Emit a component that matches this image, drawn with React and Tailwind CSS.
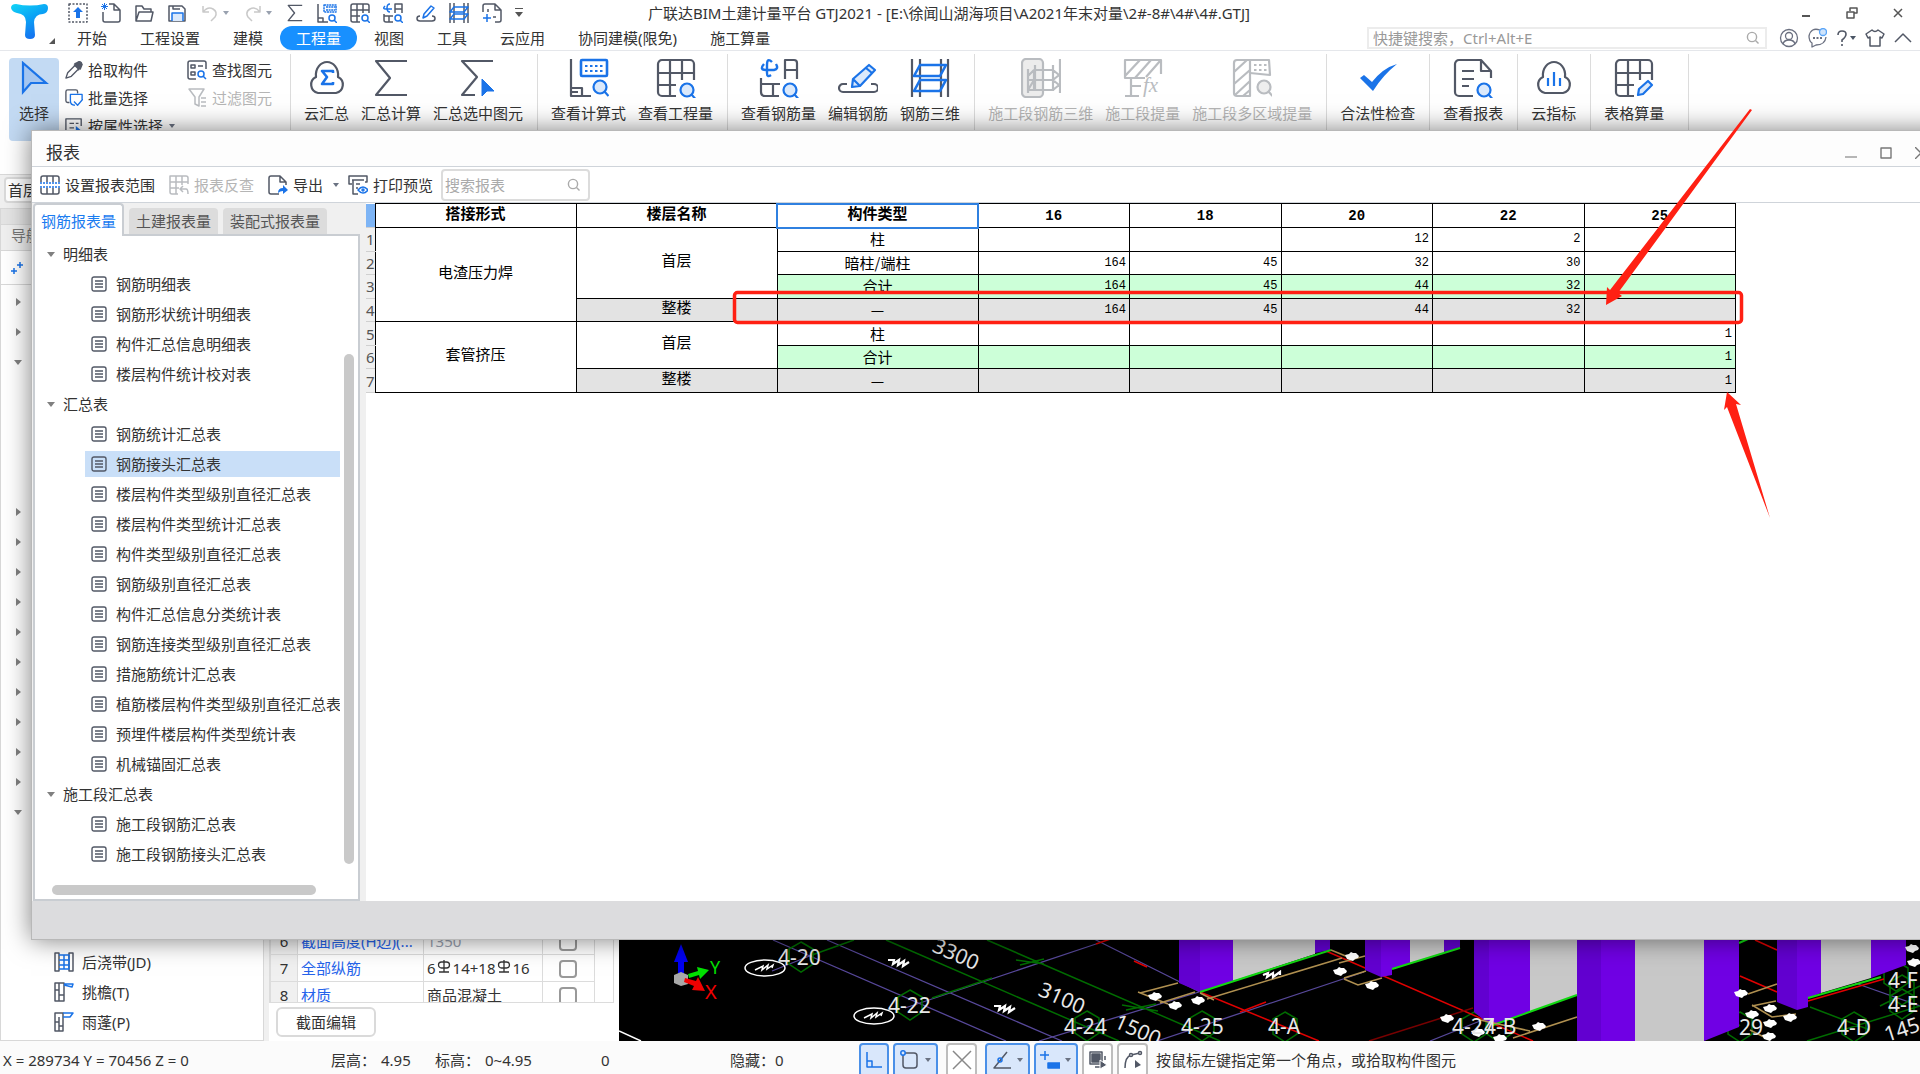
const GRAY = "#525866";
const BLUE = "#1a73e8";
const MUTED = "#b9bcc0";

function Icon({ box = 20, className = "w-5 h-5", color = GRAY, width = 1.5, children }) {
  return (
    <svg
      viewBox={`0 0 ${box} ${box}`}
      className={`shrink-0 ${className}`}
      fill="none"
      stroke={color}
      strokeWidth={width}
      strokeLinejoin="round"
      aria-hidden="true"
    >
      {children}
    </svg>
  );
}

function Big({ color = GRAY, children }) {
  return (
    <Icon box={40} className="w-10 h-10" color={color} width={2.2}>
      {children}
    </Icon>
  );
}

function Caret({ className = "text-gray-500" }) {
  return (
    <svg viewBox="0 0 8 8" className={`w-2 h-2 shrink-0 ${className}`} fill="currentColor" aria-hidden="true">
      <path d="M1 2h6L4 6z" />
    </svg>
  );
}

function Search({ className = "w-4 h-4" }) {
  return (
    <Icon box={16} className={className} color="#aaa" width={1.4}>
      <circle cx="7" cy="7" r="4.6" />
      <path d="M10.5 10.5l3 3" />
    </Icon>
  );
}

function Lens({ x = 31, y = 32, color = BLUE, fill = "#dbe9fb" }) {
  return (
    <g stroke={color}>
      <circle cx={x} cy={y} r="6.5" fill={fill} />
      <path d={`M${x + 4.5} ${y + 4.5}l4 4.5`} />
    </g>
  );
}

const sigma = "M36 3H5l14 17L5 37h31";
const cloud = "M11 35a8.5 8.5 0 0 1-2-16c-1-9 5-15 11-15s12 6 11 15a8.5 8.5 0 0 1-2 16z";
const gridPath = "M20 38H6a4 4 0 0 1-4-4V6a4 4 0 0 1 4-4h28a4 4 0 0 1 4 4v16M2 15h36M2 27h18M14 2v36M26 2v20";

function CloudSum() {
  return (
    <Big>
      <path d={cloud} />
      <path d="M26 15v-2H15l5 6-5 7h11v-2" stroke={BLUE} strokeWidth="2.6" />
    </Big>
  );
}

function Sigma() {
  return (
    <Big>
      <path d={sigma} />
    </Big>
  );
}

function SigmaPick() {
  return (
    <Big>
      <path d="M35 3H4l15 16L4 37h13" />
      <path d="M24 21v17l5-5h7z" fill={BLUE} stroke={BLUE} strokeWidth="1" />
    </Big>
  );
}

function Formula() {
  return (
    <Big>
      <path d="M2 1v37h20M2 30h11v8M2 34h7" />
      <rect x="12" y="2" width="26" height="16" rx="1" stroke={BLUE} strokeWidth="2.6" />
      <path d="M16 8h19M16 13h19" stroke={BLUE} strokeDasharray="2.5 2.5" />
      <Lens y={29} />
    </Big>
  );
}

function GridFind() {
  return (
    <Big>
      <path d={gridPath} />
      <Lens />
    </Big>
  );
}

function RebarFind() {
  return (
    <Big>
      <path d="M26 21V2h9q3 0 3 3v16M26 12h12M2 20v14q0 4 4 4h14M2 26h19M14 26v12" />
      <path d="M13 4q-5-5-5 3v8q0 5 4 2M5 6q-5 6 2 6h8q5-1 2-6" stroke={BLUE} strokeWidth="2.4" />
      <Lens />
    </Big>
  );
}

function RebarEdit() {
  return (
    <Big>
      <path d="M9 26H5a4 4 0 1 0 0 8h31a4 4 0 1 0 0-8h-3" />
      <path d="M14 29l1-8L31 7l6 5-15 16zM28 10l6 5M15 21l7 7" stroke={BLUE} fill="#dbe9fb" />
    </Big>
  );
}

function Rebar3d() {
  return (
    <Big>
      <path d="M2 1v38M10 1v38M31 1v38M38 1v38" />
      <path d="M4 18L10 7h26l-6 11zM4 33l6-11h26l-6 11z" stroke={BLUE} strokeWidth="2.6" />
    </Big>
  );
}

function Stage3d() {
  return (
    <Big color={MUTED}>
      <rect x="1" y="1" width="21" height="38" rx="4" fill="#ececec" />
      <path d="M7 11v24M14 7v26M32 7v26M39 1v34M7 18l6-6h19l6 5-6 5H7M7 32l6-10M13 12v20h19l6-5-6-5M7 32h6" />
    </Big>
  );
}

function StageFx() {
  return (
    <Big color={MUTED}>
      <path d="M38 16V2H2v18h20M8 20v18M2 38h14M8 28h10M2 18L17 2M12 20L28 2M23 19L37 3" />
      <text x="20" y="34" fontSize="21" fontStyle="italic" fontFamily="Liberation Serif" fill={MUTED} stroke="none">
        fx
      </text>
    </Big>
  );
}

function StageArea() {
  return (
    <Big color={MUTED}>
      <path d="M18 2H5a3 3 0 0 0-3 3v30a3 3 0 0 0 3 3h13zM2 14L15 2M2 26L18 12M3 37L18 23M11 38l7-6" />
      <path d="M18 2h19l1 15-20-2" />
      <path d="M22 7h13M22 12h13" strokeDasharray="2.5 2.5" />
      <Lens x={32} y={29} color={MUTED} fill="#eee" />
    </Big>
  );
}

function Check() {
  return (
    <Big>
      <path d="M2 20l4-3 8 7Q25 10 39 6 25 17 15 33z" fill={BLUE} stroke="none" />
    </Big>
  );
}

function ReportFind() {
  return (
    <Big>
      <path d="M20 38H6a4 4 0 0 1-4-4V6a4 4 0 0 1 4-4h22l10 11v7M28 3v10h10" />
      <path d="M9 13h12M9 21h12M9 28h7" />
      <Lens />
    </Big>
  );
}

function CloudChart() {
  return (
    <Big>
      <path d={cloud} />
      <path d="M14 28v-8M20 28V14M26 28v-8" stroke={BLUE} />
    </Big>
  );
}

function GridEdit() {
  return (
    <Big>
      <path d={gridPath} />
      <path d="M24 37l1-6 9-8 4 4-9 9z" stroke={BLUE} fill="#dbe9fb" />
    </Big>
  );
}

const ribbonGroups = [
  [
    ["云汇总", CloudSum],
    ["汇总计算", Sigma],
    ["汇总选中图元", SigmaPick],
  ],
  [
    ["查看计算式", Formula],
    ["查看工程量", GridFind],
  ],
  [
    ["查看钢筋量", RebarFind],
    ["编辑钢筋", RebarEdit],
    ["钢筋三维", Rebar3d],
  ],
  [
    ["施工段钢筋三维", Stage3d, true],
    ["施工段提量", StageFx, true],
    ["施工段多区域提量", StageArea, true],
  ],
  [["合法性检查", Check]],
  [["查看报表", ReportFind]],
  [["云指标", CloudChart]],
  [["表格算量", GridEdit]],
];

const menus = ["开始", "工程设置", "建模", "工程量", "视图", "工具", "云应用", "协同建模(限免)", "施工算量"];

function QuickAccess() {
  return (
    <div className="flex w-[586px] shrink-0 items-center gap-[13px] pl-1.5">
      <button aria-label="上传">
        <Icon>
          <rect x="1" y="1" width="18" height="18" strokeDasharray="2 1.5" />
          <path d="M10 4l5 5h-3v6H8V9H5z" fill={BLUE} stroke="none" />
        </Icon>
      </button>
      <button aria-label="新建">
        <Icon>
          <path d="M8 1h5l6 6v10q0 2-2 2H4q-2 0-2-2V9M13 1v6h6" />
          <path d="M1 1l5 5M6 1L1 6M3.500 0v7M0 3.500h7" stroke={BLUE} strokeWidth="1" />
        </Icon>
      </button>
      <button aria-label="打开">
        <Icon>
          <path d="M2 18V3h6l2 3h7v3M2 18L5 9h14l-2 9z" />
        </Icon>
      </button>
      <button aria-label="保存">
        <Icon>
          <path d="M2 3h13l3 3v12H2zM6 3v3h7" />
          <path d="M5 18v-8h11v8" stroke={BLUE} fill="#dbe9fb" />
        </Icon>
      </button>
      <button aria-label="撤销" className="flex items-center gap-0.5">
        <Icon color="#c9c9c9">
          <path d="M3 3v6h6M3 9q5-6 10-3t2 8l-4 4" />
        </Icon>
        <Caret className="text-gray-400" />
      </button>
      <button aria-label="重做" className="flex items-center gap-0.5">
        <Icon color="#c9c9c9">
          <path d="M17 3v6h-6M17 9Q12 3 7 6t-2 8l4 4" />
        </Icon>
        <Caret className="text-gray-400" />
      </button>
      <button aria-label="汇总">
        <Icon box={40} className="w-[18px] h-5" width={3}>
          <path d={sigma} />
        </Icon>
      </button>
      <button aria-label="计算式">
        <Icon>
          <path d="M1 1v18h10M1 15h5v4" />
          <path d="M7 2h12v7H7zM9 4h9M9 7h9" stroke={BLUE} strokeDasharray="2 .6" />
          <circle cx="15" cy="15" r="3" stroke={BLUE} />
          <path d="M17 17l3 3" stroke={BLUE} />
        </Icon>
      </button>
      <button aria-label="工程量">
        <Icon>
          <path d="M10 19H3q-2 0-2-2V3q0-2 2-2h14q2 0 2 2v7M1 7h18M1 13h9M7 1v18M13 1v9" />
          <circle cx="15" cy="15" r="3" stroke={BLUE} />
          <path d="M17 17l3 3" stroke={BLUE} />
        </Icon>
      </button>
      <button aria-label="钢筋量">
        <Icon>
          <path d="M12 10V1h7v9M12 6h7M1 11v6q0 2 2 2h7M1 13h9M6 13v6" />
          <path d="M7 1Q4 1 4 5t3 4M2 3Q-1 6 3 6h6M15 12a3 3 0 1 0 0 6 3 3 0 1 0 0-6M17 17l3 3" stroke={BLUE} />
        </Icon>
      </button>
      <button aria-label="编辑钢筋">
        <Icon>
          <path d="M4 13q-3 0-3 2.500T4 18h12q3 0 3-2.500T16 13" />
          <path d="M7 15l1-4 7-8 3 2-7 8z" stroke={BLUE} />
        </Icon>
      </button>
      <button aria-label="三维">
        <Icon>
          <path d="M1 0v20M5 0v20M15 0v20M19 0v20" />
          <path d="M1 9l4-5h14l-4 5zM1 16l4-5h14l-4 5z" stroke={BLUE} />
        </Icon>
      </button>
      <button aria-label="导出图元">
        <Icon>
          <path d="M1 9V3q0-2 2-2h10l6 6v10q0 2-2 2h-4M13 1v6h6M6 6v3M14 14h-3" />
          <path d="M5 11v8M1 15h8" stroke={BLUE} />
        </Icon>
      </button>
      <button aria-label="更多">
        <svg viewBox="0 0 8 10" className="w-2 h-2.5" fill="#555" aria-hidden="true">
          <path d="M0 0h8v1H0zM0 4h8L4 9z" />
        </svg>
      </button>
    </div>
  );
}

function Header() {
  return (
    <header className="flex border-b border-gray-200 bg-white">
      <div className="flex w-[62px] shrink-0 items-end pl-[11px] pb-1.5">
        <svg viewBox="0 0 38 38" className="mb-1 w-[38px] h-[38px]" aria-hidden="true">
          <defs>
            <linearGradient id="logo" x1="0" y1="0" x2="0.5" y2="1">
              <stop offset="0" stopColor="#12d5f6" />
              <stop offset="0.5" stopColor="#0aa4f5" />
              <stop offset="1" stopColor="#1673f0" />
            </linearGradient>
          </defs>
          <path
            d="M5 2Q19 5 33 2q4 0 4 4 0 5-5 6-8 0-9 8l1 13q0 4-5 4t-5-4l1-13q0-8-9-9-5-1-6-5 0-4 5-4z"
            fill="url(#logo)"
          />
        </svg>
        <svg viewBox="0 0 6 6" className="w-1.5 h-1.5 shrink-0" aria-hidden="true">
          <path d="M6 0v6H0z" fill="#555" />
        </svg>
      </div>
      <div className="min-w-0 flex-1">
        <div className="flex h-[26px] items-center">
          <QuickAccess />
          <h1 className="whitespace-nowrap">
            广联达BIM土建计量平台 GTJ2021 - [E:\徐闻山湖海项目\A2021年末对量\2#-8#\4#\4#.GTJ]
          </h1>
          <div className="ml-auto flex items-center gap-[34px] pr-4">
            <button aria-label="最小化">
              <Icon box={12} className="w-3 h-3" color="#555" width={2}>
                <path d="M2 9h8" />
              </Icon>
            </button>
            <button aria-label="还原">
              <Icon box={12} className="w-3 h-3" color="#555">
                <path d="M4 4V1h7v5H8M1 5h7v6H1z" />
              </Icon>
            </button>
            <button aria-label="关闭">
              <Icon box={12} className="w-3 h-3" color="#555">
                <path d="M2 2l8 8M10 2l-8 8" />
              </Icon>
            </button>
          </div>
        </div>
        <div className="flex h-6 items-center">
          <nav className="-ml-px flex gap-px whitespace-nowrap">
            {menus.map((m) => (
              <button
                key={m}
                className={`h-6 px-4 ${m === "工程量" ? "rounded-full bg-[#1890ff] text-white" : ""}`}
              >
                {m}
              </button>
            ))}
          </nav>
          <label className="ml-auto flex h-[22px] w-[400px] items-center border-2 border-[#ececec] px-1">
            <input
              className="min-w-0 flex-1 outline-none placeholder:text-[#999]"
              placeholder="快捷键搜索，Ctrl+Alt+E"
              aria-label="快捷键搜索"
            />
            <Search />
          </label>
          <div className="ml-3 flex items-center gap-2 pr-[7px]">
            <button aria-label="用户">
              <Icon color="#6b7080" width={1.3}>
                <circle cx="10" cy="10" r="8.500" />
                <circle cx="10" cy="8" r="3.5" />
                <path d="M4 16q1-4 6-4t6 4" />
              </Icon>
            </button>
            <button aria-label="消息">
              <Icon color="#6b7080" width={1.3}>
                <path d="M13 2Q4-1 2 8q0 5 3 7v4l4-2q9 0 10-8" />
                <path d="M6 10h9" strokeDasharray="2 1.500" strokeWidth="2" />
                <circle cx="16" cy="4" r="3.5" stroke="#5aa5f8" fill="#cfe4fc" />
              </Icon>
            </button>
            <button aria-label="帮助" className="flex w-[22px] items-center">
              <Icon box={14} className="w-3.5 h-5" color="#525866" width={1.600}>
                <path d="M3 4q0-4 4-4t4 3-4 6v2M7 13v2" />
              </Icon>
              <Caret className="text-gray-600" />
            </button>
            <button aria-label="皮肤">
              <Icon>
                <path d="M7 2q3 3 6 0l6 4-2 4-2-1v9H5V9l-2 1-2-4z" />
              </Icon>
            </button>
            <button aria-label="收起">
              <Icon>
                <path d="M2 14l8-8 8 8" />
              </Icon>
            </button>
          </div>
        </div>
      </div>
    </header>
  );
}

function Ribbon() {
  return (
    <div className="flex h-[123px] shrink-0 whitespace-nowrap bg-white pl-[9px]">
      <button className="mt-[7px] flex h-[83px] w-[50px] flex-col items-center rounded bg-[#c3daf3] pt-[3px]">
        <Icon box={34} className="w-[34px] h-[34px]" color={BLUE} width={2.2}>
          <path d="M6 2v29l8-9h15z" fill="#a5c6f0" strokeLinejoin="miter" />
        </Icon>
        <span className="mt-2">选择</span>
      </button>
      <div className="ml-1.5 flex w-[122px] flex-col gap-2 pt-[9px]">
        <button className="flex items-center gap-[5px]">
          <Icon className="w-[18px] h-5">
            <path d="M1 19l2-6 8-8 4 4-8 8zM10 4l6 6M12 5q2-5 5-4t0 6l-2 2z" />
            <path d="M11 3l6 6 2-5-3-3z" fill={GRAY} />
          </Icon>
          拾取构件
        </button>
        <button className="flex items-center gap-[5px]">
          <Icon className="w-[18px] h-5">
            <path d="M5 15H3q-2 0-2-2V3q0-2 2-2h9q2 0 2 2v2" />
            <path d="M11 18q-5 0-5-5V6h13v7M10 14l4 4 6-7" stroke={BLUE} />
          </Icon>
          批量选择
        </button>
        <button className="flex items-center gap-[5px]">
          <Icon className="w-[18px] h-5">
            <path d="M10 18H1V2h17v8M5 7h5M5 12h5M12 7h3" />
            <path d="M12 10v8l6-3z" fill={BLUE} stroke="none" />
          </Icon>
          按属性选择
          <Caret />
        </button>
      </div>
      <div className="flex w-[103px] flex-col gap-2 pt-[9px]">
        <button className="flex items-center gap-[5px]">
          <Icon>
            <path d="M9 19H3q-2 0-2-2V3q0-2 2-2h14q2 0 2 2v6M4 5h4v3H4zM4 12h4v3H4zM11 6h5" />
            <circle cx="14" cy="14" r="3" stroke={BLUE} />
            <path d="M16 16l3 3" stroke={BLUE} />
          </Icon>
          查找图元
        </button>
        <button className="flex items-center gap-[5px] text-[#b5b5b5]">
          <Icon color={MUTED}>
            <path d="M2 1h15l-5 8v9l-4-2V9zM14 10h5M14 14h5M14 18h5" />
          </Icon>
          过滤图元
        </button>
      </div>
      {ribbonGroups.map((group, i) => (
        <div
          key={i}
          className={`mt-[3px] flex gap-3 border-l border-[#dcdcdc] pr-3.5 pl-[13px] ${
            i === ribbonGroups.length - 1 ? "mr-auto border-r pr-6" : ""
          }`}
        >
          {group.map(([label, Pic, off]) => (
            <button
              key={label}
              className={`flex h-[69px] flex-col items-center justify-between pt-1 ${off ? "text-[#b5b5b5]" : ""}`}
            >
              <Pic />
              <span>{label}</span>
            </button>
          ))}
        </div>
      ))}
    </div>
  );
}

const navRows = [
  "closed", "closed", "open", "", "", "", "", "closed", "closed", "closed",
  "closed", "closed", "closed", "closed", "closed", "closed", "closed", "open",
];

function NavPanel() {
  return (
    <aside className="flex w-[264px] shrink-0 flex-col border border-[#d8d8d8] bg-white">
      <div className="h-[15px] bg-[#e4e4e4]" />
      <div className="h-[27px] border-y border-[#d8d8d8] bg-[#efefef] pl-2.5 text-[#777]">导航栏</div>
      <div className="flex h-[34px] shrink-0 items-center border-b border-[#d8d8d8] pl-2.5">
        <Icon box={12} className="w-3 h-3" color={BLUE}>
          <path d="M3 6v6M0 9h6M9 0v6M6 3h6" />
        </Icon>
      </div>
      <div className="pt-0.5">
        {navRows.map((state, i) => (
          <div key={i} className="flex h-[30px] items-center pl-3">
            {state && (
              <svg viewBox="0 0 10 10" className="w-2.5 h-2.5" fill="#808080" aria-hidden="true">
                <path d={state === "open" ? "M1 3h8L5 8z" : "M3 1v8l5-4z"} />
              </svg>
            )}
          </div>
        ))}
      </div>
      <div className="mt-auto pb-[3px]">
        <div className="flex h-[30px] items-center gap-2 pl-[53px]">
          <Icon>
            <path d="M1 1h4v18H1zM15 1h4v18h-4z" />
            <path d="M5 3h10v14H5M10 3v14M5 8h10M5 13h10" stroke={BLUE} />
          </Icon>
          后浇带(JD)
        </div>
        <div className="flex h-[30px] items-center gap-2 pl-[53px]">
          <Icon>
            <path d="M1 1h9v18H1zM5 1v18M1 8h4M5 13h5" />
            <path d="M10 2h9l-1 3-8-2" stroke={BLUE} />
          </Icon>
          挑檐(T)
        </div>
        <div className="flex h-[30px] items-center gap-2 pl-[53px]">
          <Icon>
            <path d="M1 1h8v18H1zM5 5v14M1 10h4M5 14h4" />
            <path d="M9 1h10l-3 4H9" stroke={BLUE} />
          </Icon>
          雨蓬(P)
        </div>
      </div>
    </aside>
  );
}

const props = [
  [6, "截面高度(H边)(...", "1350"],
  [7, "全部纵筋", ""],
  [8, "材质", "商品混凝土"],
];

function Rebar() {
  return (
    <svg viewBox="0 0 17 15" className="inline-block w-[17px] h-[15px] align-baseline" fill="none" stroke="#333" strokeWidth="1.3" aria-hidden="true">
      <path d="M8 1v12M3 13h10" />
      <rect x="2.500" y="3" width="11" height="6" rx="3" />
    </svg>
  );
}

function PropertyPanel() {
  return (
    <section className="ml-[5px] flex w-[345px] shrink-0 flex-col justify-end bg-white">
      <div className="h-[76px] overflow-hidden border-x border-b border-[#dcdcdc]">
        <table className="w-[324px] table-fixed border-collapse">
          <colgroup>
            <col className="w-[27px]" />
            <col className="w-[126px]" />
            <col className="w-[119px]" />
            <col className="w-[52px]" />
          </colgroup>
          <tbody>
            {props.map(([n, name, value]) => (
              <tr key={n} className="h-[27px] whitespace-nowrap">
                <td className="border border-[#dcdcdc] bg-[#f0f0f0] text-center">{n}</td>
                <td className="border border-[#dcdcdc] pl-[3px] text-[#2563eb]">{name}</td>
                <td className={`border border-[#dcdcdc] pl-[3px] ${n === 6 ? "text-gray-400" : ""}`}>
                  {n === 7 ? (
                    <span>
                      6<Rebar />14+18<Rebar />16
                    </span>
                  ) : (
                    value
                  )}
                </td>
                <td className="border border-[#dcdcdc] pr-0.5 text-center">
                  <input
                    type="checkbox"
                    aria-label={name}
                    className="h-[18px] w-[18px] appearance-none rounded-sm border-2 border-[#999] align-middle"
                  />
                </td>
              </tr>
            ))}
          </tbody>
        </table>
      </div>
      <button className="mt-1 mb-1 ml-[7px] h-[30px] w-[100px] rounded-md border-2 border-[#dadada]">截面编辑</button>
    </section>
  );
}

const purpleCols = [
  ["M1179 930V983l21 9V930z", "M1200 930V992l33-11V930z"],
  ["M1315 930V953l15-3V930z", ""],
  ["M1365 930V970l16 7V930z", "M1381 930V977l11-2v-6l18-6V930z"],
  ["M1444 930V952l16-4V930z", ""],
  ["M1474 930V1012l15 12V930z", "M1489 930V1024l4 1 37-13V930z"],
  ["M1577 930V1041h24V930z", "M1601 930V1041h34V930z"],
  ["", "M1704 930V1041l35-14V930z"],
  ["M1777 930V1002l20 8V930z", "M1797 930V1010l11-3v-9l13-5V930z"],
  ["", "M1871 930V978l35-13V930z"],
];

const hexagons = [
  [801, 957], [910, 1005], [1087, 1026], [1202, 1026], [1285, 1027], [1474, 1027],
  [1499, 1027], [1740, 1027], [1854, 1027], [1896, 976], [1902, 990], [1902, 1004],
];

const blobs = [
  [1155, 996], [1175, 1005], [1198, 1000], [1352, 956], [1340, 971], [1372, 985], [1447, 1018], [1478, 1032],
  [1539, 1026], [1500, 1038], [1741, 993], [1770, 1008], [1790, 1017], [1752, 1014], [1770, 1023], [1769, 1036],
  [1912, 948], [1914, 962],
];

const marks = [
  [778, 965, "4-20"], [888, 1013, "4-22"], [1064, 1034, "4-24"], [1181, 1034, "4-25"],
  [1268, 1034, "4-A"], [1452, 1034, "4-27"], [1484, 1034, "4-B"], [1739, 1035, "29"],
  [1837, 1035, "4-D"], [1888, 1012, "4-E"], [1888, 988, "4-F"],
];

function ModelView() {
  return (
    <div className="flex min-w-0 flex-1 items-end bg-black">
      <svg
        viewBox="619 930 1301 111"
        preserveAspectRatio="xMinYMax slice"
        className="h-[111px] w-full"
        fontFamily="Noto Sans"
        fill="none"
        role="img"
        aria-label="三维模型"
      >
        <g stroke="#57489a" strokeWidth="1.300">
          <path d="M773 940l233 101M827 940l235 101M905 1008l191-64M812 955l-40 16M1088 936l112 56M1039 1041l160-49M1157 1041l207-69M1264 956l50-18M1855 983l65 23M1430 1041l50-20" />
        </g>
        <g stroke="#006c00" strokeWidth="1.500">
          <path d="M886 940l233 101M987 940l233 101M812 955l42-15M1030 962m-14-2l28 4M1020 965l24-6M1126 1010l30-6M1122 1005l36 6M932 998l60-20M1807 1041l113-35M1810 1007l60 23M1700 1041l40-16M1880 1006l40-20" />
          {hexagons.map(([x, y]) => (
            <path key={`${x}-${y}`} d={`M${x} ${y - 15}l12 7v15l-12 8-12-8v-15z`} />
          ))}
        </g>
        <g stroke="#e00000" strokeWidth="1.5">
          <path d="M1096 944l20-7M1134 961l13 6M1200 992l119 49M1326 951l207 90M1740 976l37 16M1755 940l22 10M1808 1001l76-22M1240 1012l26-10" />
          <path d="M1369 1041l104-33" stroke="#780000" />
        </g>
        <g fill="#c8c8c8">
          <path d="M1233 930h82v24l-82 27zM1410 930h34v23l-34 10zM1530 930h47v65l-47 17zM1635 930h69v111h-69zM1821 930h50v48l-50 15z" />
        </g>
        {purpleCols.map(([dark, light], i) => (
          <g key={i}>
            <path d={dark} fill="#6200d0" />
            <path d={light} fill="#7000e4" />
          </g>
        ))}
        <path
          d="M1200 992l131-42M1392 969l68-21M1493 1025l84-30M1808 998l73-21M1739 943l9-4"
          stroke="#12d812"
          strokeWidth="2"
        />
        <g stroke="#b09050" strokeWidth="1.500">
          <path d="M1207 999l135-41M1140 993l38-10M1160 1003l35-11M1138 992l30 12M1200 993l14 7M1331 950l22 9M1339 963l26-7M1344 978l22-7M1344 979l14 6 24-7M1513 1038l64-21M1480 1020l50 11M1748 994l29-10M1752 1006l24-5M1752 1005l20 12 24-3M1750 1030l20 10" />
        </g>
        <g fill="#fff">
          {blobs.map(([x, y]) => (
            <path key={`${x}-${y}`} d={`M${x - 7} ${y - 1}l4-1 2-2 2 1 3 0 3 3-1 2-3 1-2 2-3-1-3-1z`} />
          ))}
        </g>
        <g stroke="#fff" strokeWidth="1.500">
          <ellipse cx="765" cy="968" rx="20" ry="8" />
          <ellipse cx="874" cy="1016" rx="20" ry="8" />
          <path d="M755 970l8-4-1 4 6-5-1 4 6-4-1 3M864 1018l8-4-1 4 6-5-1 4 6-4-1 3M619 1031l22 10" />
          <path
            d="M888 960l6 0-1 4 6-4-1 5 6-4-1 5 6-4M994 1006l6 0-1 4 6-4-1 5 6-4-1 5 6-4M1263 975l5-2-1 4 6-4v4l7-5v3"
            strokeWidth="2.200"
          />
        </g>
        <g fill="#e8e8e8" fontSize="21">
          {marks.map(([x, y, t]) => (
            <text key={t} x={x} y={y}>
              {t}
            </text>
          ))}
          <text transform="translate(931 951) rotate(24)">3300</text>
          <text transform="translate(1037 995) rotate(24)">3100</text>
          <text transform="translate(1113 1027) rotate(24)">1500</text>
          <text transform="translate(1887 1042) rotate(-18)">145</text>
        </g>
        <path d="M678 962h6v15h-6z" fill="#0000f0" />
        <path d="M681 944l7 18h-14z" fill="#0000f0" />
        <path d="M674 975l7-3 7 3v9l-7 2-7-3z" fill="#a8a8a8" />
        <path d="M688 974l10-3-1-4 12 3-9 9-1-4-10 3z" fill="#00e000" />
        <path d="M685 978l11 3 2-4 7 14-13-1 2-4-10-4z" fill="#f00000" />
        <text x="710" y="974" fontSize="18" fill="#00e000">Y</text>
        <text x="705" y="999" fontSize="20" fill="#f00000">X</text>
      </svg>
    </div>
  );
}

function StatusBar() {
  const on = "flex h-[34px] items-center justify-center gap-1 rounded border-2 border-[#4a90e8] bg-[#d9e7fb]";
  const off = "flex h-[34px] items-center justify-center rounded border-2 border-[#bdbdbd] bg-white";
  return (
    <footer className="flex h-[33px] shrink-0 items-center overflow-hidden whitespace-nowrap bg-[#fbfbfb] pl-[3px] pt-1">
      <span className="w-[328px]">X = 289734 Y = 70456 Z = 0</span>
      <span className="w-[50px]">层高：</span>
      <span className="w-[54px]">4.95</span>
      <span className="w-[50px]">标高：</span>
      <span className="w-[116px]">0~4.95</span>
      <span className="w-[129px]">0</span>
      <span className="w-[129px]">隐藏：0</span>
      <div className="flex gap-1">
        <button aria-label="正交" className={`${on} w-[30px]`}>
          <Icon color={BLUE}>
            <path d="M3 2v15h15M3 11h5v6" />
          </Icon>
        </button>
        <button aria-label="捕捉" className={`${on} w-[45px]`}>
          <Icon>
            <rect x="3" y="3" width="14" height="15" rx="3" />
            <circle cx="3" cy="3" r="2.200" stroke={BLUE} fill="#d9e7fb" />
          </Icon>
          <Caret />
        </button>
        <button aria-label="交点" className={`${off} ml-1 w-[31px]`}>
          <Icon color="#888">
            <path d="M1 1l18 18M19 1L1 19" />
          </Icon>
        </button>
        <button aria-label="角度" className={`${on} ml-1 w-[45px]`}>
          <Icon>
            <path d="M15 2L2 18h17" />
            <circle cx="8" cy="10" r="2" stroke={BLUE} />
          </Icon>
          <Caret />
        </button>
        <button aria-label="动态输入" className={`${on} w-[44px]`}>
          <Icon color={BLUE}>
            <path d="M5 1v9M0 5h9" />
            <rect x="8" y="13" width="12" height="5" fill={BLUE} />
          </Icon>
          <Caret />
        </button>
        <button aria-label="选择模式" className={`${off} w-[31px]`}>
          <Icon>
            <path d="M2 2h12v12H2zM7 17h5M17 6v4" />
            <path d="M4 4h8v8H4z" fill={GRAY} />
            <path d="M12 10v9l7-4z" fill={GRAY} stroke="#fff" strokeWidth="1" />
          </Icon>
        </button>
        <button aria-label="折线选择" className={`${off} w-[31px]`}>
          <Icon>
            <path d="M2 18Q2 7 8 5l9-2" />
            <circle cx="8" cy="5" r="1.500" fill="#fff" />
            <circle cx="17" cy="3" r="1.500" fill="#fff" />
            <path d="M12 10v8l6-3z" fill={GRAY} stroke="none" />
          </Icon>
        </button>
      </div>
      <span className="ml-2">按鼠标左键指定第一个角点，或拾取构件图元</span>
    </footer>
  );
}

const reportTree = [
  ["明细表", ["钢筋明细表", "钢筋形状统计明细表", "构件汇总信息明细表", "楼层构件统计校对表"]],
  [
    "汇总表",
    [
      "钢筋统计汇总表",
      "钢筋接头汇总表",
      "楼层构件类型级别直径汇总表",
      "楼层构件类型统计汇总表",
      "构件类型级别直径汇总表",
      "钢筋级别直径汇总表",
      "构件汇总信息分类统计表",
      "钢筋连接类型级别直径汇总表",
      "措施筋统计汇总表",
      "植筋楼层构件类型级别直径汇总表",
      "预埋件楼层构件类型统计表",
      "机械锚固汇总表",
    ],
  ],
  ["施工段汇总表", ["施工段钢筋汇总表", "施工段钢筋接头汇总表"]],
];

function ReportTree() {
  return (
    <div className="flex min-h-0 flex-1 flex-col border-2 border-[#c9cdd2] bg-white pt-[3px]">
      <div className="flex min-h-0 flex-1">
        <ul className="min-w-0 flex-1 overflow-hidden whitespace-nowrap">
          {reportTree.map(([title, items]) => (
            <li key={title}>
              <div className="flex h-[30px] items-center gap-[7px] pl-[11px]">
                <svg viewBox="0 0 10 10" className="w-2.5 h-2.5" fill="#808080" aria-hidden="true">
                  <path d="M1 3h8L5 8z" />
                </svg>
                {title}
              </div>
              <ul>
                {items.map((item) => (
                  <li key={item} className="py-0.5 pl-[50px]">
                    <button
                      className={`flex h-[26px] w-full items-center gap-[9px] pl-1.5 ${
                        item === "钢筋接头汇总表" ? "bg-[#c9dff8]" : ""
                      }`}
                    >
                      <Icon box={16} className="w-4 h-4" width={1.4}>
                        <rect x="1" y="1" width="14" height="14" rx="2" />
                        <path d="M4 5h8M4 8h8M4 11h8" />
                      </Icon>
                      {item}
                    </button>
                  </li>
                ))}
              </ul>
            </li>
          ))}
        </ul>
        <div className="mt-[115px] mr-1 ml-1 h-[510px] w-2.5 rounded-full bg-[#c9c9c9]" />
      </div>
      <div className="mb-1 ml-[17px] h-2.5 w-[264px] rounded-full bg-[#c9c9c9]" />
    </div>
  );
}

const diameters = ["16", "18", "20", "22", "25"];
const rows = [
  { lap: "电渣压力焊", lapSpan: 4, floor: "首层", floorSpan: 3, type: "柱", n: ["", "", "12", "2", ""] },
  { type: "暗柱/端柱", n: ["164", "45", "32", "30", ""] },
  { type: "合计", tone: "bg-[#ccffd8]", n: ["164", "45", "44", "32", ""] },
  { floor: "整楼", floorSpan: 1, type: "—", tone: "bg-[#e3e3e3]", n: ["164", "45", "44", "32", ""] },
  { lap: "套管挤压", lapSpan: 3, floor: "首层", floorSpan: 2, type: "柱", n: ["", "", "", "", "1"] },
  { type: "合计", tone: "bg-[#ccffd8]", n: ["", "", "", "", "1"] },
  { floor: "整楼", floorSpan: 1, type: "—", tone: "bg-[#e3e3e3]", n: ["", "", "", "", "1"] },
];

function ReportTable() {
  const cell = "border border-black p-0";
  return (
    <table className="h-[190px] w-[1370px] table-fixed border-collapse bg-white text-center font-['Liberation_Mono','Noto_Sans_CJK_SC',monospace] leading-5 text-black">
      <colgroup>
        <col className="w-[9px]" />
        <col className="w-[201px]" />
        <col className="w-[201px]" />
        <col className="w-[201px]" />
        <col span="5" />
      </colgroup>
      <thead>
        <tr className="h-6">
          <th className="bg-[#7db4f5] p-0" />
          <th className={cell}>搭接形式</th>
          <th className={cell}>楼层名称</th>
          <th className={`${cell} outline-2 -outline-offset-1 outline-[#2f80e0]`}>构件类型</th>
          {diameters.map((d) => (
            <th key={d} className={`${cell} text-[14px]`}>
              {d}
            </th>
          ))}
        </tr>
      </thead>
      <tbody>
        {rows.map((r, i) => (
          <tr key={i}>
            <td className="border-y border-[#d0d0d0] bg-[#f0f0f0] p-0 font-['Noto_Sans',sans-serif] text-[#555]">
              {i + 1}
            </td>
            {r.lap && (
              <td className={cell} rowSpan={r.lapSpan}>
                {r.lap}
              </td>
            )}
            {r.floor && (
              <td className={`${cell} ${r.tone || ""}`} rowSpan={r.floorSpan}>
                {r.floor}
              </td>
            )}
            <td className={`${cell} font-['Noto_Sans_CJK_SC',sans-serif] ${r.tone || ""}`}>{r.type}</td>
            {r.n.map((v, j) => (
              <td key={j} className={`border border-black py-0 pr-[3px] text-right text-[12px] ${r.tone || ""}`}>
                {v}
              </td>
            ))}
          </tr>
        ))}
      </tbody>
    </table>
  );
}

function ReportDialog() {
  return (
    <section className="absolute top-[130px] -right-[30px] bottom-[134px] left-[31px] flex flex-col border border-[#b8b8b8] bg-[#f0f0f0] shadow-[0_0_24px_rgba(0,0,0,0.5)]">
      <div className="flex h-9 shrink-0 items-center border-b border-[#cfd4da] bg-[#fdfdfd] pt-3 pr-[22px] pb-1 pl-3.5">
        <h2 className="text-[17px]">报表</h2>
        <div className="ml-auto flex gap-[23px]">
          <button aria-label="最小化报表">
            <Icon box={12} className="w-3 h-3" color="#888" width={1.2}>
              <path d="M0 10h12" />
            </Icon>
          </button>
          <button aria-label="最大化报表">
            <Icon box={12} className="w-3 h-3" color="#777" width={1.4}>
              <path d="M1 1h10v10H1z" />
            </Icon>
          </button>
          <button aria-label="关闭报表">
            <Icon box={12} className="w-3 h-3" color="#777" width={1.4}>
              <path d="M0 0l12 12M12 0L0 12" />
            </Icon>
          </button>
        </div>
      </div>
      <div className="flex h-9 shrink-0 items-center border-b border-[#cfd4da] bg-white pl-2">
        <button className="flex items-center gap-[5px]">
          <Icon>
            <path d="M1 7V3q0-2 2-2h14q2 0 2 2v4M1 13v4q0 2 2 2h14q2 0 2-2v-4M7 1v6M13 1v6M7 13v6M13 13v6" />
            <path d="M0 8h20M0 12h20" stroke={BLUE} strokeDasharray="2 1" />
          </Icon>
          设置报表范围
        </button>
        <button className="ml-3.5 flex items-center gap-[5px] text-[#b5b5b5]">
          <Icon color={MUTED}>
            <path d="M9 19H3q-2 0-2-2V1h16q2 0 2 2v6M1 7h18M1 13h9M7 1v18M13 1v9M14 11l-3 3 3 3M11 14h6q2 0 2 5" />
          </Icon>
          报表反查
        </button>
        <button className="ml-3.5 flex items-center gap-[5px]">
          <Icon>
            <path d="M11 19H3q-2 0-2-2V3q0-2 2-2h9l6 6v3M12 1v6h6" />
            <path d="M10 18q0-5 5-5v-3l5 5-5 4v-3q-3 0-5 2z" fill={BLUE} stroke="none" />
          </Icon>
          导出
          <Caret className="ml-1 text-gray-500" />
        </button>
        <button className="ml-2 flex items-center gap-[5px]">
          <Icon>
            <path d="M4 9H1V1h18v6h-2M4 5h12M5 5v14h5M8 9h4M8 13h2" />
            <path d="M10 15q5-6 10 0-5 6-10 0z" stroke={BLUE} />
            <circle cx="15" cy="15" r="1" stroke={BLUE} />
          </Icon>
          打印预览
        </button>
        <label className="ml-2 flex h-8 w-[149px] items-center rounded border-2 border-[#dcdcdc] px-0.5">
          <input
            className="min-w-0 flex-1 outline-none placeholder:text-[#aaa]"
            placeholder="搜索报表"
            aria-label="搜索报表"
          />
          <Search className="mr-1 w-4 h-4" />
        </label>
      </div>
      <div className="flex min-h-0 flex-1">
        <div className="flex w-[328px] shrink-0 flex-col pl-px">
          <div className="flex h-[31px] shrink-0 items-end gap-[5px] whitespace-nowrap text-[#555]">
            <button className="relative top-0.5 h-[33px] rounded-t border-2 border-b-0 border-[#c9cdd2] bg-white px-1.5 text-[#1a7cf0]">
              钢筋报表量
            </button>
            <button className="h-[26px] rounded-t bg-[#dcdcdc] px-[7px]">土建报表量</button>
            <button className="h-[26px] rounded-t bg-[#dcdcdc] px-[7px]">装配式报表量</button>
          </div>
          <ReportTree />
        </div>
        <div className="ml-1.5 min-w-0 flex-1 bg-white">
          <ReportTable />
        </div>
      </div>
      <div className="h-[38px] shrink-0 bg-[#dcdcde]" />
    </section>
  );
}

function Markup() {
  return (
    <svg viewBox="0 0 1920 1074" preserveAspectRatio="xMinYMin slice" className="pointer-events-none absolute inset-0 h-full w-full" fill="#ff2013" aria-hidden="true">
      <rect x="734.500" y="292.500" width="1007" height="30" rx="3" fill="none" stroke="#ff2013" strokeWidth="3.500" />
      <path d="M1752 110L1618 293l4 3-16 9 1-18 3 3L1750 109z" />
      <path d="M1770 518L1727 407l-3 3 3-18 14 13-5-1z" />
    </svg>
  );
}

export default function App() {
  return (
    <div className="relative flex h-screen flex-col overflow-hidden bg-[#f0f0f0] font-['Noto_Sans','Noto_Sans_CJK_SC',sans-serif] text-[15px] leading-5 text-[#333]">
      <Header />
      <Ribbon />
      <div className="h-[34px] shrink-0 border-t border-[#d8d8d8] pt-0.5 pl-1">
        <button className="h-[26px] w-[90px] rounded border-2 border-[#dadada] bg-white px-0.5 text-left">首层</button>
      </div>
      <div className="flex min-h-0 flex-1">
        <NavPanel />
        <PropertyPanel />
        <div className="w-[5px] shrink-0 bg-white" />
        <ModelView />
      </div>
      <StatusBar />
      <ReportDialog />
      <Markup />
    </div>
  );
}
